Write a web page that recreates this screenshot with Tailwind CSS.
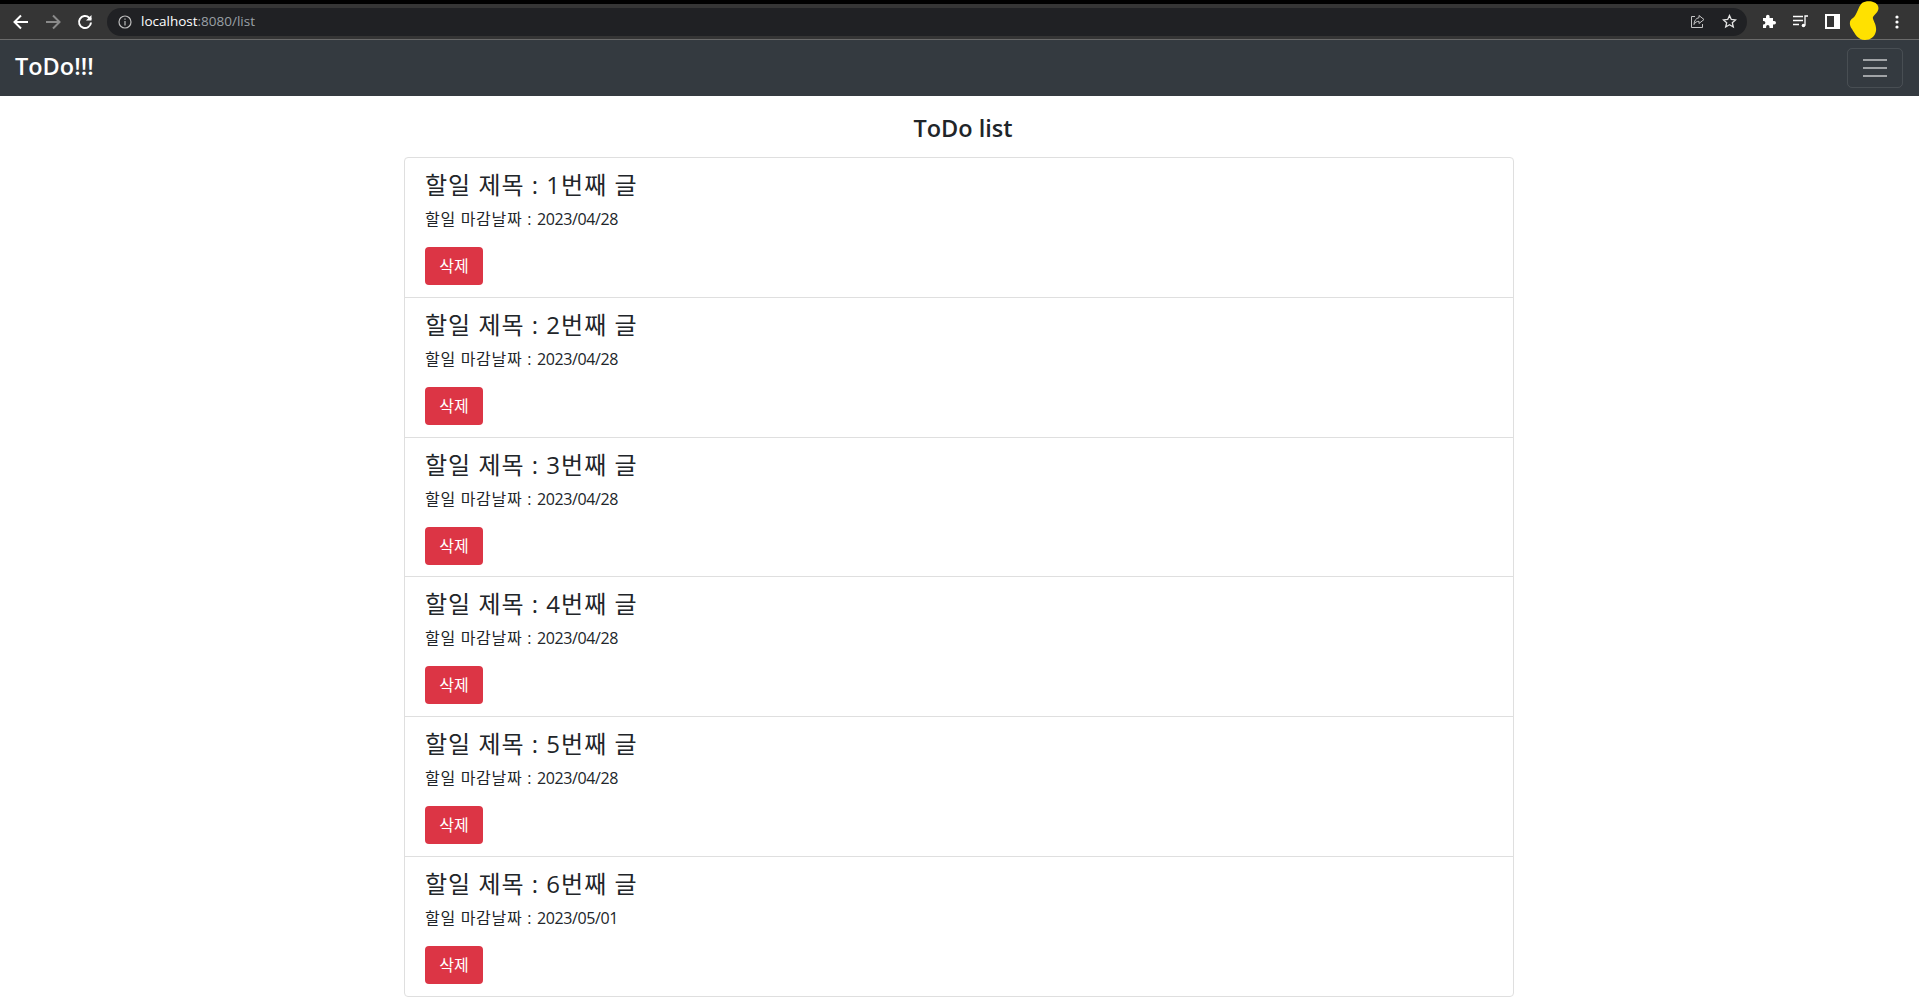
<!DOCTYPE html>
<html lang="ko">
<head>
    <meta charset="UTF-8">
    <title>ToDo list</title>
    <script src="https://cdn.jsdelivr.net/npm/@tailwindcss/browser@4"></script>
</head>
<body class="bg-white text-[#212529] overflow-hidden font-['Open_Sans','Noto_Sans_CJK_KR',sans-serif]">
    <!-- browser chrome -->
    <div class="h-[40px] bg-[#353535] border-t-4 border-b border-t-black border-b-[#6b6b6b] flex items-center">
        <div class="flex items-center w-[107px] pl-[11px] gap-[12px] shrink-0">
            <svg class="w-[20px] h-[20px]" viewBox="0 0 20 20" fill="none" stroke="#fff" stroke-width="2"><path d="M17 10H4M10 3.5 3.5 10l6.5 6.5"/></svg>
            <svg class="w-[20px] h-[20px]" viewBox="0 0 20 20" fill="none" stroke="#8a8a8a" stroke-width="2"><path d="M3 10h13M10 3.5l6.500 6.500-6.500 6.500"/></svg>
            <svg class="w-[20px] h-[20px]" viewBox="0 0 20 20" fill="none" stroke="#fff" stroke-width="2"><path d="M16 10.500a6 6 0 1 1-1.800-4.800L16 7.500"/><path d="M16.500 3v5.500H11" fill="#fff" stroke="none"/></svg>
        </div>
        <div class="w-[1640px] h-[28px] rounded-full bg-[#202124] flex items-center shrink-0 pl-[11px] pr-[10px]">
            <svg class="w-[14px] h-[14px] shrink-0" viewBox="0 0 14 14" fill="none" stroke="#bdbdbd" stroke-width="1.200"><circle cx="7" cy="7" r="6"/><path d="M7 6v4.500M7 3.500v1.300"/></svg>
            <span class="ml-[9px] text-[13.5px] text-white">localhost<span class="text-[#9aa0a6]">:8080/list</span></span>
            <div class="ml-auto flex items-center gap-[17px]">
                <svg class="w-[15px] h-[15px]" viewBox="0 0 15 15" fill="none" stroke="#c4c4c4"><path d="M5 2.500H1.500v11h11V10"/><path d="M9 1.500l5 4-5 4V7.300C6.500 7.300 5 8.500 4 10.500 4 7 6 4 9 3.700z"/></svg>
                <svg class="w-[15px] h-[15px]" viewBox="0 0 15 15" fill="none" stroke="#e4e4e4" stroke-width="1.300"><path d="M7.500 1.500l1.800 4 4.200.4-3.200 2.800 1 4.300-3.800-2.300-3.800 2.300 1-4.300L1.500 5.900l4.200-.4z"/></svg>
            </div>
        </div>
        <div class="flex items-center pl-[15px] gap-[16px]">
            <svg class="w-[15px] h-[15px]" viewBox="0 0 15 15" fill="#fff"><path d="M1 4h3V2.500a1.800 1.800 0 0 1 3.600 0V4h3.400v3h1.200a1.800 1.800 0 0 1 0 3.600H11V14H7.500v-1.200a1.700 1.700 0 0 0-3.400 0V14H1v-3.400h.6a1.800 1.800 0 0 0 0-3.600H1z"/></svg>
            <svg class="w-[16px] h-[15px]" viewBox="0 0 16 15" fill="none" stroke="#fff" stroke-width="1.300"><path d="M0 2.500h10M0 6.500h10M0 10.500h6M12 11.500V2h3"/><circle cx="10.500" cy="11.500" r="1.800" fill="#fff" stroke="none"/></svg>
            <div class="w-[15px] h-[15px] bg-white p-[2px] pr-[6px]"><div class="w-full h-full bg-[#353535]"></div></div>
            <svg class="w-[31px] h-[40px] ml-[-7px] -mt-[1px]" viewBox="0 0 31 40" fill="#ffe100"><path d="M13 2c5-3 14-2 16 3 2 5-3 8-5 11-1 3 4 7 3 14-1 6-6 9-11 9-7 0-10-6-13-11-3-4-3-9 1-11 4-3 5-11 9-15z"/></svg>
            <svg class="w-[4px] h-[14px] ml-[-1px]" viewBox="0 0 4 14" fill="#fff"><circle cx="2" cy="2" r="1.600"/><circle cx="2" cy="7" r="1.600"/><circle cx="2" cy="12" r="1.600"/></svg>
        </div>
    </div>

    <!-- navbar -->
    <nav class="h-[56px] bg-[#343a40] flex items-center justify-between pl-[15px] pr-[16px]">
        <a class="text-[23.5px] font-semibold text-white -mt-[3px]">ToDo!!!</a>
        <button class="w-[56px] h-[40px] rounded-[5px] border border-white/10 flex flex-col items-center justify-center gap-[6px]">
            <span class="block w-[24px] h-[2px] bg-[#a0a3a6]"></span>
            <span class="block w-[24px] h-[2px] bg-[#a0a3a6]"></span>
            <span class="block w-[24px] h-[2px] bg-[#a0a3a6]"></span>
        </button>
    </nav>

    <main class="w-[1110px] ml-[404px]">
        <h4 class="h-[61px] pt-[14px] pl-[8px] text-center text-[23.5px] leading-[36px] font-semibold">ToDo list</h4>
        <ul class="border border-[#dfdfdf] rounded-[4px] divide-y divide-[#dfdfdf]">
            <li class="h-[139.8px] px-[20px] pt-[11px]">
                <h5 class="text-[24px] leading-[32px] tracking-[1px]">할일 제목 : 1번째 글</h5>
                <p class="mt-[6px] text-[16px] leading-[24px] tracking-[0.7px]">할일 마감날짜 : <span class="tracking-[-0.4px]">2023/04/28</span></p>
                <button class="mt-[16px] w-[58px] h-[38px] rounded-[4px] bg-[#dc3545] text-white text-[16px]">삭제</button>
            </li>
            <li class="h-[139.8px] px-[20px] pt-[11px]">
                <h5 class="text-[24px] leading-[32px] tracking-[1px]">할일 제목 : 2번째 글</h5>
                <p class="mt-[6px] text-[16px] leading-[24px] tracking-[0.7px]">할일 마감날짜 : <span class="tracking-[-0.4px]">2023/04/28</span></p>
                <button class="mt-[16px] w-[58px] h-[38px] rounded-[4px] bg-[#dc3545] text-white text-[16px]">삭제</button>
            </li>
            <li class="h-[139.8px] px-[20px] pt-[11px]">
                <h5 class="text-[24px] leading-[32px] tracking-[1px]">할일 제목 : 3번째 글</h5>
                <p class="mt-[6px] text-[16px] leading-[24px] tracking-[0.7px]">할일 마감날짜 : <span class="tracking-[-0.4px]">2023/04/28</span></p>
                <button class="mt-[16px] w-[58px] h-[38px] rounded-[4px] bg-[#dc3545] text-white text-[16px]">삭제</button>
            </li>
            <li class="h-[139.8px] px-[20px] pt-[11px]">
                <h5 class="text-[24px] leading-[32px] tracking-[1px]">할일 제목 : 4번째 글</h5>
                <p class="mt-[6px] text-[16px] leading-[24px] tracking-[0.7px]">할일 마감날짜 : <span class="tracking-[-0.4px]">2023/04/28</span></p>
                <button class="mt-[16px] w-[58px] h-[38px] rounded-[4px] bg-[#dc3545] text-white text-[16px]">삭제</button>
            </li>
            <li class="h-[139.8px] px-[20px] pt-[11px]">
                <h5 class="text-[24px] leading-[32px] tracking-[1px]">할일 제목 : 5번째 글</h5>
                <p class="mt-[6px] text-[16px] leading-[24px] tracking-[0.7px]">할일 마감날짜 : <span class="tracking-[-0.4px]">2023/04/28</span></p>
                <button class="mt-[16px] w-[58px] h-[38px] rounded-[4px] bg-[#dc3545] text-white text-[16px]">삭제</button>
            </li>
            <li class="h-[139px] px-[20px] pt-[11px]">
                <h5 class="text-[24px] leading-[32px] tracking-[1px]">할일 제목 : 6번째 글</h5>
                <p class="mt-[6px] text-[16px] leading-[24px] tracking-[0.7px]">할일 마감날짜 : <span class="tracking-[-0.4px]">2023/05/01</span></p>
                <button class="mt-[16px] w-[58px] h-[38px] rounded-[4px] bg-[#dc3545] text-white text-[16px]">삭제</button>
            </li>
        </ul>
    </main>
</body>
</html>
